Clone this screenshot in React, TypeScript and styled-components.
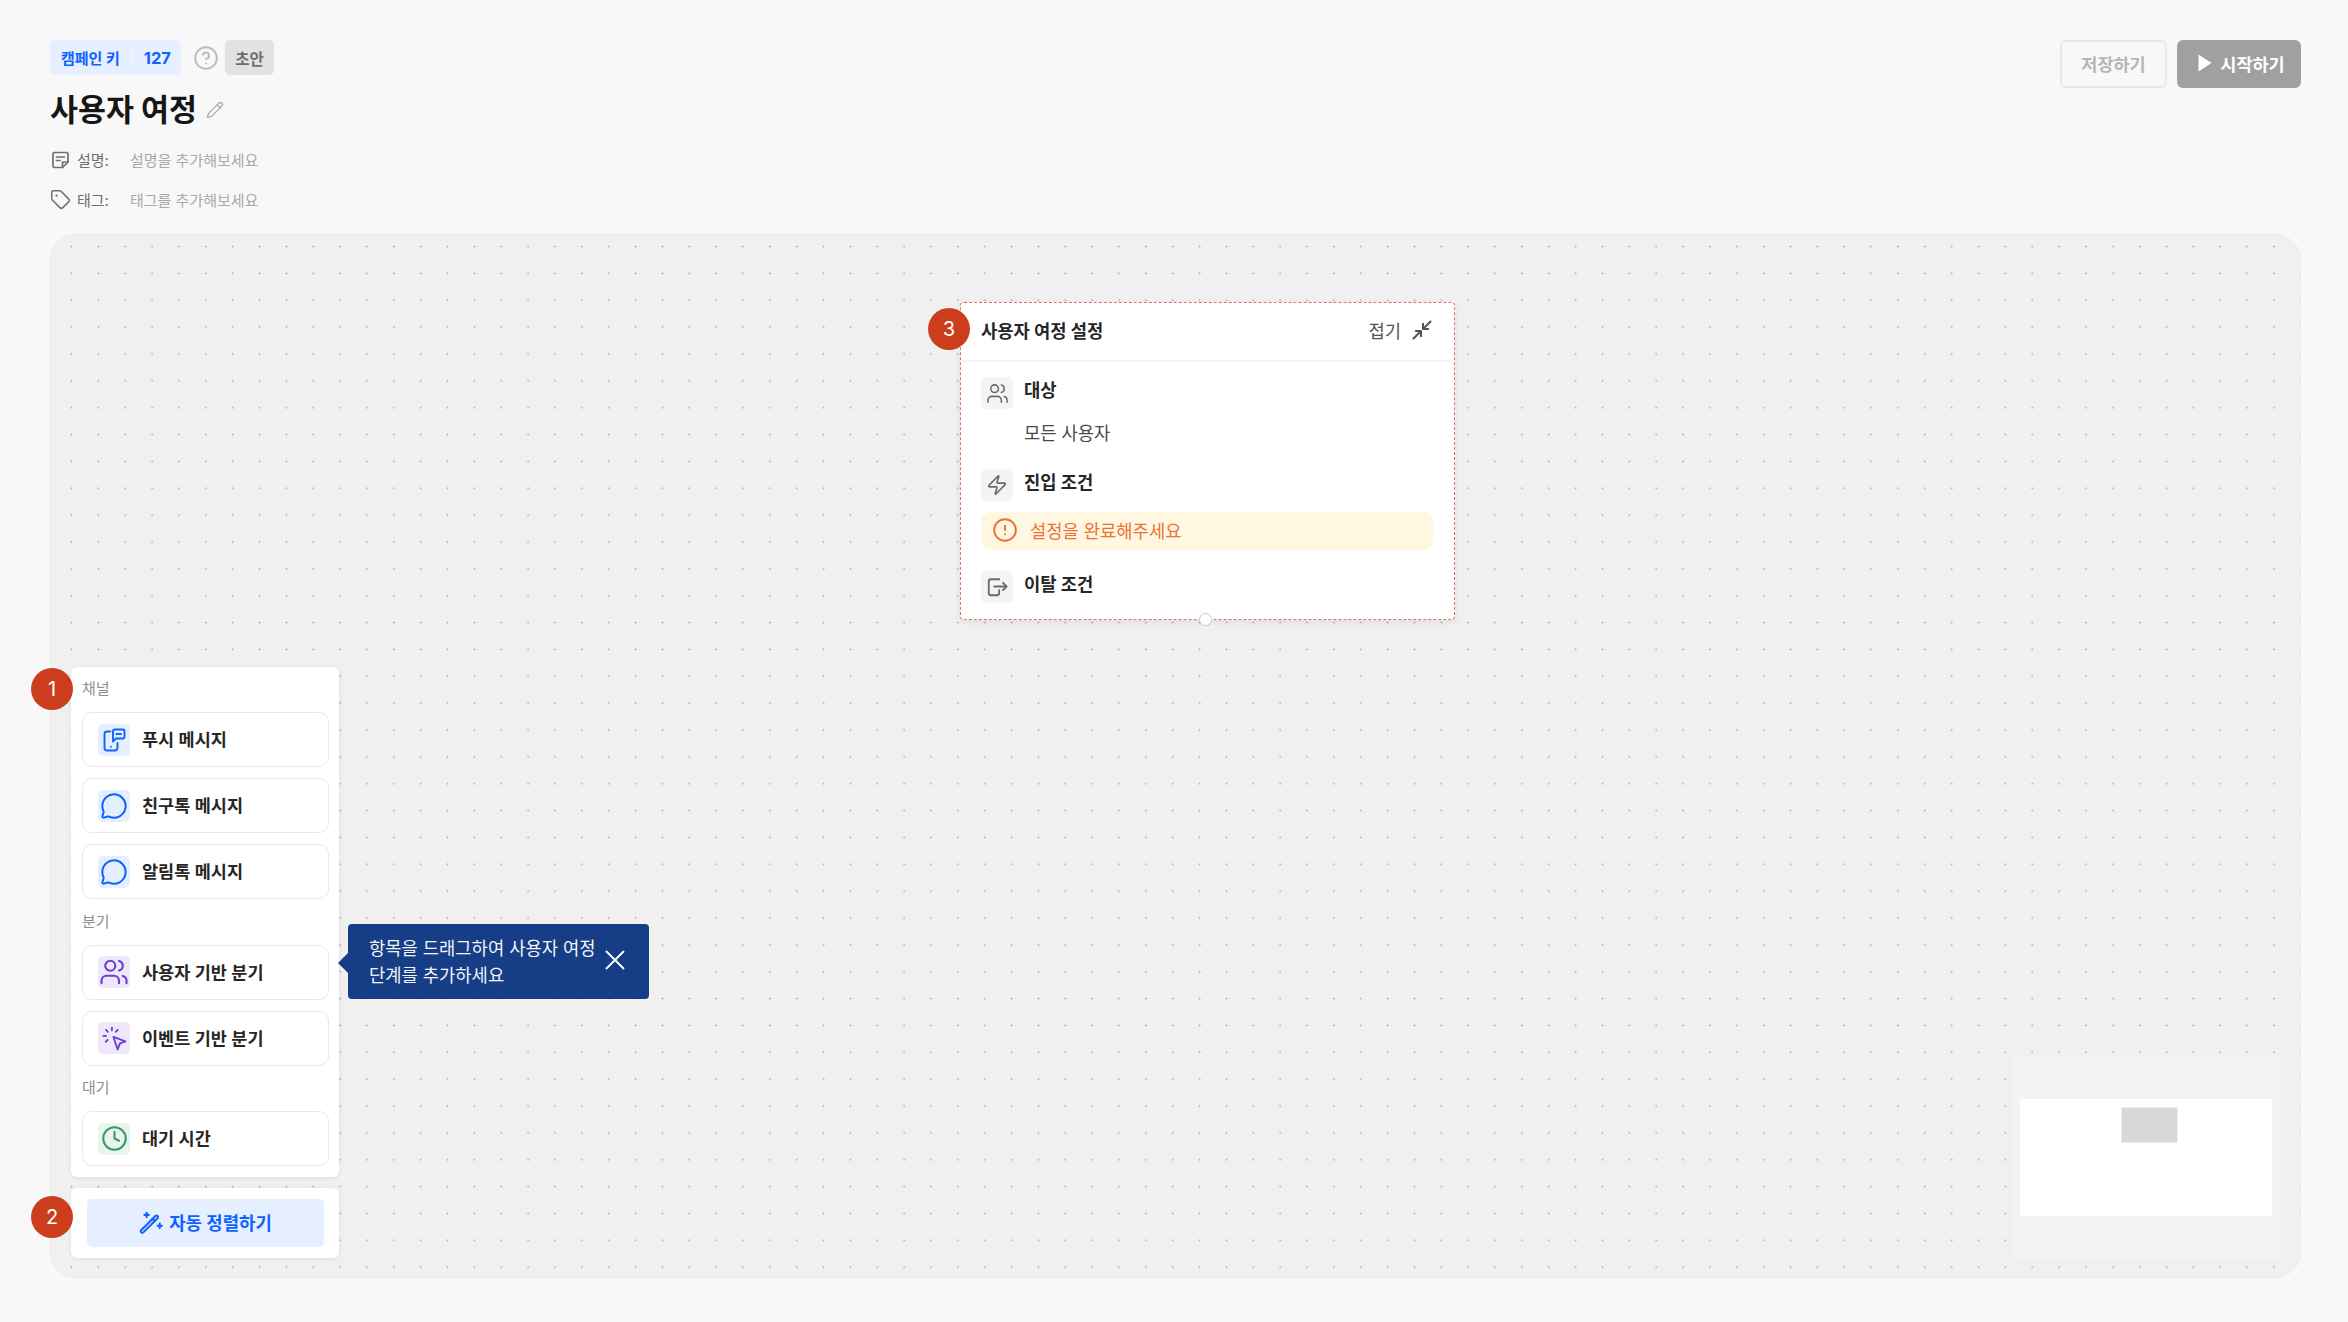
import React from "react";
import styled, { createGlobalStyle } from "styled-components";
import { Users, MessageCircle, Clock, X, Pencil, Tag, CircleHelp, CircleAlert, Zap } from "lucide-react";

const Global = createGlobalStyle`
  html, body { margin: 0; padding: 0; background: #f8f8f8; }
  body { font-family: Inter, "Noto Sans CJK KR", sans-serif; color: #161616; }
  * { box-sizing: border-box; }
`;

const Page = styled.div`
  width: 2348px;
  height: 1322px;
  padding: 40px 47px 44px 50px;
  display: flex;
  flex-direction: column;
  background: #f8f8f8;
  overflow: hidden;
`;
const Header = styled.header`
  height: 194px;
  flex: none;
  display: flex;
  justify-content: space-between;
  align-items: flex-start;
`;
const Info = styled.div`
  display: flex;
  flex-direction: column;
`;
const TopRow = styled.div`
  display: flex;
  align-items: center;
  height: 35px;
`;
const KeyChip = styled.div`
  display: flex;
  align-items: center;
  height: 35px;
  width: 131px;
  padding-left: 11px;
  border-radius: 5px;
  background: #e5efff;
  color: #0f62fe;
  font-size: 15px;
  font-weight: 700;
  white-space: nowrap;
`;
const KeyValue = styled.span`
  font-size: 16.5px;
`;
const ChipDivider = styled.span`
  width: 1px;
  height: 19px;
  margin: 0 11px 0 12px;
  background: #f4f8ff;
`;
const HelpMark = styled.span`
  display: flex;
  margin: 0 6px 0 12px;
  color: #bdbdbd;
`;
const DraftChip = styled.div`
  display: flex;
  align-items: center;
  justify-content: center;
  width: 49px;
  height: 35px;
  border-radius: 5px;
  background: #e2e2e2;
  color: #6f6f6f;
  font-size: 15.5px;
  font-weight: 700;
`;
const TitleRow = styled.div`
  display: flex;
  align-items: center;
  gap: 9px;
  height: 46px;
  margin-top: 12px;
`;
const Title = styled.h1`
  margin: 0;
  font-size: 30.4px;
  font-weight: 700;
  line-height: 46px;
  color: #161616;
`;
const EditMark = styled.span`
  display: flex;
  color: #a8a8a8;
`;
const MetaList = styled.div`
  display: flex;
  flex-direction: column;
  gap: 15.5px;
  margin-top: 14.5px;
`;
const MetaRow = styled.div`
  display: flex;
  align-items: center;
  height: 24px;
  font-size: 15px;
`;
const MetaIcon = styled.span`
  display: flex;
  width: 27px;
  color: #6f6f6f;
`;
const MetaLabel = styled.span`
  width: 53px;
  color: #6f6f6f;
`;
const MetaHint = styled.span`
  color: #a8a8a8;
`;
const Actions = styled.div`
  display: flex;
  gap: 10px;
`;
const SaveButton = styled.button`
  width: 107px;
  height: 48px;
  padding: 0 0 2px;
  border: 2px solid #e8e8e8;
  border-radius: 6px;
  background: transparent;
  color: #b5b5b5;
  font: 600 17.5px Inter, "Noto Sans CJK KR", sans-serif;
`;
const StartButton = styled.button`
  display: flex;
  align-items: center;
  justify-content: center;
  gap: 8px;
  width: 124px;
  height: 48px;
  padding: 0 0 2px 5px;
  border: 0;
  border-radius: 6px;
  background: #a0a0a0;
  color: #fff;
  font: 600 17.5px Inter, "Noto Sans CJK KR", sans-serif;
`;
const Canvas = styled.main`
  position: relative;
  flex: 1;
  border: 1px solid #ebebeb;
  border-radius: 26px;
  background-color: #f0f0f0;
  background-image: radial-gradient(circle, #a6a6a6 0.8px, transparent 1.1px);
  background-size: 26.87px 26.87px;
  background-position: 7.1px -1.9px;
  overflow: hidden;
`;
const Dock = styled.aside`
  position: absolute;
  left: 20px;
  bottom: 19px;
  display: flex;
  flex-direction: column;
  gap: 11px;
  width: 268px;
`;
const PalettePanel = styled.div`
  display: flex;
  flex-direction: column;
  padding: 11px 10px 11px 11px;
  border-radius: 6px;
  background: #fff;
  box-shadow: 0 1px 4px rgba(0, 0, 0, 0.08);
`;
const SectionLabel = styled.div<{ $first?: boolean }>`
  height: 22px;
  line-height: 22px;
  margin: ${(p) => (p.$first ? "0 0 12px" : "11.5px 0 12px")};
  color: #8d8d8d;
  font-size: 15px;
`;
const ItemStack = styled.div`
  display: flex;
  flex-direction: column;
  gap: 11px;
`;
const PaletteItem = styled.div`
  display: flex;
  align-items: center;
  gap: 12px;
  height: 55px;
  padding: 0 0 2px 15px;
  border: 1px solid #e8e8e8;
  border-radius: 10px;
  background: #fff;
  color: #262626;
  font-size: 17.5px;
  font-weight: 600;
`;
const ItemIcon = styled.span<{ $bg: string; $fg: string }>`
  display: flex;
  align-items: center;
  justify-content: center;
  width: 32px;
  height: 32px;
  margin-bottom: -2px;
  border-radius: 5px;
  background: ${(p) => p.$bg};
  color: ${(p) => p.$fg};
`;
const ArrangePanel = styled.div`
  padding: 11px 15px 11px 16px;
  border-radius: 6px;
  background: #fff;
  box-shadow: 0 1px 4px rgba(0, 0, 0, 0.08);
`;
const ArrangeButton = styled.button`
  display: flex;
  align-items: center;
  justify-content: center;
  gap: 6px;
  width: 100%;
  height: 48px;
  padding: 0 0 3px;
  border: 0;
  border-radius: 5px;
  background: #e5efff;
  color: #0f62fe;
  font: 600 17.8px Inter, "Noto Sans CJK KR", sans-serif;
`;
const StepBadge = styled.span<{ $x: number; $y: number }>`
  position: absolute;
  left: ${(p) => p.$x}px;
  top: ${(p) => p.$y}px;
  display: flex;
  align-items: center;
  justify-content: center;
  width: 42px;
  height: 42px;
  border-radius: 50%;
  background: #cc3d1d;
  color: #fff;
  font: 400 20px Inter, sans-serif;
  z-index: 5;
`;
const Tip = styled.div`
  position: absolute;
  left: 297px;
  top: 689px;
  display: flex;
  align-items: center;
  justify-content: space-between;
  width: 301px;
  height: 75px;
  padding: 0 17px 0 21px;
  border-radius: 4px;
  background: #153e87;
  color: #f4f4f4;
  font-size: 17.7px;
  line-height: 27px;
  &::before {
    content: "";
    position: absolute;
    left: -10px;
    top: 38px;
    width: 0;
    height: 0;
    border: 10px solid transparent;
    border-left: 0;
    border-right-color: #153e87;
    transform: translateY(-9px);
  }
`;
const TipText = styled.div`
  width: 240px;
  word-break: keep-all;
`;
const TipClose = styled.span`
  display: flex;
  margin-bottom: 3px;
  color: #fff;
`;
const FlowNode = styled.section`
  position: absolute;
  left: 909px;
  top: 67px;
  width: 495px;
  height: 318px;
  border: 1px dashed #d9765f;
  border-radius: 4px;
  background: #fff;
  box-shadow: 0 2px 6px rgba(0, 0, 0, 0.08);
`;
const NodeHead = styled.div`
  display: flex;
  align-items: center;
  justify-content: space-between;
  height: 59px;
  padding: 0 22px 3px 20px;
  border-bottom: 2px solid #f4f4f4;
`;
const NodeTitle = styled.div`
  font-size: 17.7px;
  font-weight: 700;
  color: #262626;
`;
const Fold = styled.div`
  display: flex;
  align-items: center;
  gap: 11px;
  color: #525252;
  font-size: 17.7px;
`;
const NodeBody = styled.div`
  display: flex;
  flex-direction: column;
  padding: 15px 21px 0 20px;
`;
const SettingRow = styled.div`
  display: flex;
  align-items: flex-start;
  gap: 10px;
  height: 32px;
`;
const SettingIcon = styled.span`
  display: flex;
  align-items: center;
  justify-content: center;
  width: 32px;
  height: 32px;
  border-radius: 5px;
  background: #f4f4f4;
  color: #6a6a6a;
`;
const SettingName = styled.div`
  padding-top: 1px;
  margin-left: 1px;
  font-size: 17.7px;
  font-weight: 700;
  line-height: 26px;
  color: #262626;
`;
const SettingValue = styled.div`
  height: 26px;
  margin: 12px 0 22px 43px;
  font-size: 17.7px;
  line-height: 26px;
  color: #4a4a4a;
`;
const Warning = styled.div`
  display: flex;
  align-items: center;
  gap: 12px;
  height: 38px;
  margin: 10.5px 0 21.5px;
  padding: 0 0 1px 11px;
  border-radius: 10px;
  background: #fff7e2;
  color: #ed7135;
  font-size: 17.7px;
`;
const Handle = styled.span`
  position: absolute;
  left: 238px;
  bottom: -7px;
  width: 13px;
  height: 13px;
  border: 1px solid #c8c8c8;
  border-radius: 50%;
  background: #fff;
`;
const Minimap = styled.div`
  position: absolute;
  right: 20px;
  bottom: 19px;
  display: flex;
  align-items: center;
  justify-content: center;
  width: 268px;
  height: 201px;
  background: #f3f3f3;
`;
const MapSheet = styled.div`
  position: relative;
  width: 252px;
  height: 117px;
  margin-top: -1px;
  background: #fff;
`;
const MapNode = styled.span`
  position: absolute;
  left: 101px;
  top: 8px;
  width: 57px;
  height: 36px;
  border: 1px solid #ededed;
  border-radius: 1px;
  background: #d8d8d8;
`;

const PushIcon = () => (
  <svg width="24" height="24" viewBox="0 0 24 24" fill="none" stroke="currentColor" strokeWidth="1.9" strokeLinecap="round" strokeLinejoin="round">
    <path d="M8.5 3.5H5a2.5 2.5 0 0 0-2.5 2.5v14A2.5 2.5 0 0 0 5 22.5h8a2.5 2.5 0 0 0 2.5-2.5v-5" />
    <path d="M11 3.2A1.8 1.8 0 0 1 12.8 1.5h8A1.8 1.8 0 0 1 22.5 3.3v5.4a1.8 1.8 0 0 1-1.7 1.8H14l-3 3z" />
    <path d="M14.5 6h4.5" />
    <path d="M9 18.8h.01" />
  </svg>
);
const EventIcon = () => (
  <svg width="25" height="25" viewBox="0 0 24 24" fill="none" stroke="currentColor" strokeWidth="1.8" strokeLinecap="round" strokeLinejoin="round">
    <path d="M11 10.5l11.5 4.2-5.3 2-2.2 5.8z" />
    <path d="M9.5 1.5v2.6" />
    <path d="M3.8 3.8l1.8 1.8" />
    <path d="M1.3 9.5h2.6" />
    <path d="M15 3.8l-1.6 1.7" />
    <path d="M5.4 13.4l-1.7 1.7" />
  </svg>
);
const ExitIcon = () => (
  <svg width="22" height="22" viewBox="0 0 20 20" fill="none" stroke="currentColor" strokeWidth="1.7" strokeLinecap="round" strokeLinejoin="round">
    <path d="M12 3H4.5A2 2 0 0 0 2.5 5v10.5a2 2 0 0 0 2 2H10a2 2 0 0 0 2-2V13" />
    <path d="M7.5 9.5h11" />
    <path d="M15.5 6.2l3.2 3.3-3.2 3.3" />
  </svg>
);
const NoteIcon = () => (
  <svg width="19" height="18" viewBox="-1.5 0 19 18" fill="none" stroke="currentColor" strokeWidth="1.7" strokeLinecap="round" strokeLinejoin="round">
    <path d="M11 16.5H3A1.5 1.5 0 0 1 1.5 15V3A1.5 1.5 0 0 1 3 1.5h12A1.5 1.5 0 0 1 16.5 3v8z" />
    <path d="M11 16.5V11h5.5" />
    <path d="M5 6h8" />
    <path d="M5 9.5h3.5" />
  </svg>
);
const WandIcon = () => (
  <svg width="24" height="24" viewBox="0 0 22 22" fill="none" stroke="currentColor" strokeWidth="1.9" strokeLinecap="round" strokeLinejoin="round">
    <path d="M2 18.5L15 5.5a1.4 1.4 0 0 1 2 0 1.4 1.4 0 0 1 0 2L4 20.5a1.4 1.4 0 0 1-2 0 1.4 1.4 0 0 1 0-2z" />
    <path d="M12.5 8l2 2" />
    <path d="M7 2.5v4M5 4.5h4" />
    <path d="M19 12.5v4M17 14.5h4" />
  </svg>
);
const PlayIcon = () => (
  <svg width="14" height="18" viewBox="0 0 14 18" fill="currentColor">
    <path d="M0.5 0.5L13.5 9L0.5 17.5z" />
  </svg>
);
const CollapseIcon = () => (
  <svg width="20" height="20" viewBox="0 0 20 20" fill="none" stroke="currentColor" strokeWidth="2" strokeLinecap="round" strokeLinejoin="round">
    <path d="M18.5 1.5l-6.5 6.5" />
    <path d="M11 3.8V9h5.2" />
    <path d="M1.5 18.5l6.5-6.5" />
    <path d="M9 16.2V11H3.8" />
  </svg>
);

type Item = { name: string; bg: string; fg: string; icon: React.ReactNode };
const BLUE = { bg: "#e5efff", fg: "#0f62fe" };
const PURPLE = { bg: "#efe8fb", fg: "#6a3fd1" };
const GREEN = { bg: "#e6f6ef", fg: "#3d9468" };

const channels: Item[] = [
  { name: "푸시 메시지", ...BLUE, icon: <PushIcon /> },
  { name: "친구톡 메시지", ...BLUE, icon: <MessageCircle size={28} strokeWidth={1.7} /> },
  { name: "알림톡 메시지", ...BLUE, icon: <MessageCircle size={28} strokeWidth={1.7} /> },
];
const branches: Item[] = [
  { name: "사용자 기반 분기", ...PURPLE, icon: <Users size={30} strokeWidth={1.7} /> },
  { name: "이벤트 기반 분기", ...PURPLE, icon: <EventIcon /> },
];
const waits: Item[] = [{ name: "대기 시간", ...GREEN, icon: <Clock size={27} strokeWidth={1.8} /> }];

const Items = ({ items }: { items: Item[] }) => (
  <ItemStack>
    {items.map((it) => (
      <PaletteItem key={it.name}>
        <ItemIcon $bg={it.bg} $fg={it.fg}>{it.icon}</ItemIcon>
        {it.name}
      </PaletteItem>
    ))}
  </ItemStack>
);

export default function App() {
  return (
    <Page>
      <Global />
      <Header>
        <Info>
          <TopRow>
            <KeyChip>캠페인 키<ChipDivider /><KeyValue>127</KeyValue></KeyChip>
            <HelpMark><CircleHelp size={26} strokeWidth={1.8} /></HelpMark>
            <DraftChip>초안</DraftChip>
          </TopRow>
          <TitleRow>
            <Title>사용자 여정</Title>
            <EditMark><Pencil size={18} strokeWidth={1.7} /></EditMark>
          </TitleRow>
          <MetaList>
            <MetaRow>
              <MetaIcon><NoteIcon /></MetaIcon>
              <MetaLabel>설명:</MetaLabel>
              <MetaHint>설명을 추가해보세요</MetaHint>
            </MetaRow>
            <MetaRow>
              <MetaIcon><Tag size={21} strokeWidth={1.7} /></MetaIcon>
              <MetaLabel>태그:</MetaLabel>
              <MetaHint>태그를 추가해보세요</MetaHint>
            </MetaRow>
          </MetaList>
        </Info>
        <Actions>
          <SaveButton>저장하기</SaveButton>
          <StartButton><PlayIcon />시작하기</StartButton>
        </Actions>
      </Header>
      <Canvas>
        <FlowNode>
          <NodeHead>
            <NodeTitle>사용자 여정 설정</NodeTitle>
            <Fold>접기<CollapseIcon /></Fold>
          </NodeHead>
          <NodeBody>
            <SettingRow>
              <SettingIcon><Users size={23} strokeWidth={1.6} /></SettingIcon>
              <SettingName>대상</SettingName>
            </SettingRow>
            <SettingValue>모든 사용자</SettingValue>
            <SettingRow>
              <SettingIcon><Zap size={22} strokeWidth={1.8} /></SettingIcon>
              <SettingName>진입 조건</SettingName>
            </SettingRow>
            <Warning>
              <CircleAlert size={26} strokeWidth={1.8} />
              설정을 완료해주세요
            </Warning>
            <SettingRow>
              <SettingIcon><ExitIcon /></SettingIcon>
              <SettingName>이탈 조건</SettingName>
            </SettingRow>
          </NodeBody>
          <Handle />
        </FlowNode>
        <Dock>
          <PalettePanel>
            <SectionLabel $first>채널</SectionLabel>
            <Items items={channels} />
            <SectionLabel>분기</SectionLabel>
            <Items items={branches} />
            <SectionLabel>대기</SectionLabel>
            <Items items={waits} />
          </PalettePanel>
          <ArrangePanel>
            <ArrangeButton><WandIcon />자동 정렬하기</ArrangeButton>
          </ArrangePanel>
        </Dock>
        <Tip>
          <TipText>항목을 드래그하여 사용자 여정 단계를 추가하세요</TipText>
          <TipClose><X size={34} strokeWidth={1.3} /></TipClose>
        </Tip>
        <Minimap>
          <MapSheet><MapNode /></MapSheet>
        </Minimap>
      </Canvas>
      <StepBadge $x={31} $y={668}>1</StepBadge>
      <StepBadge $x={31} $y={1196}>2</StepBadge>
      <StepBadge $x={928} $y={308}>3</StepBadge>
    </Page>
  );
}
